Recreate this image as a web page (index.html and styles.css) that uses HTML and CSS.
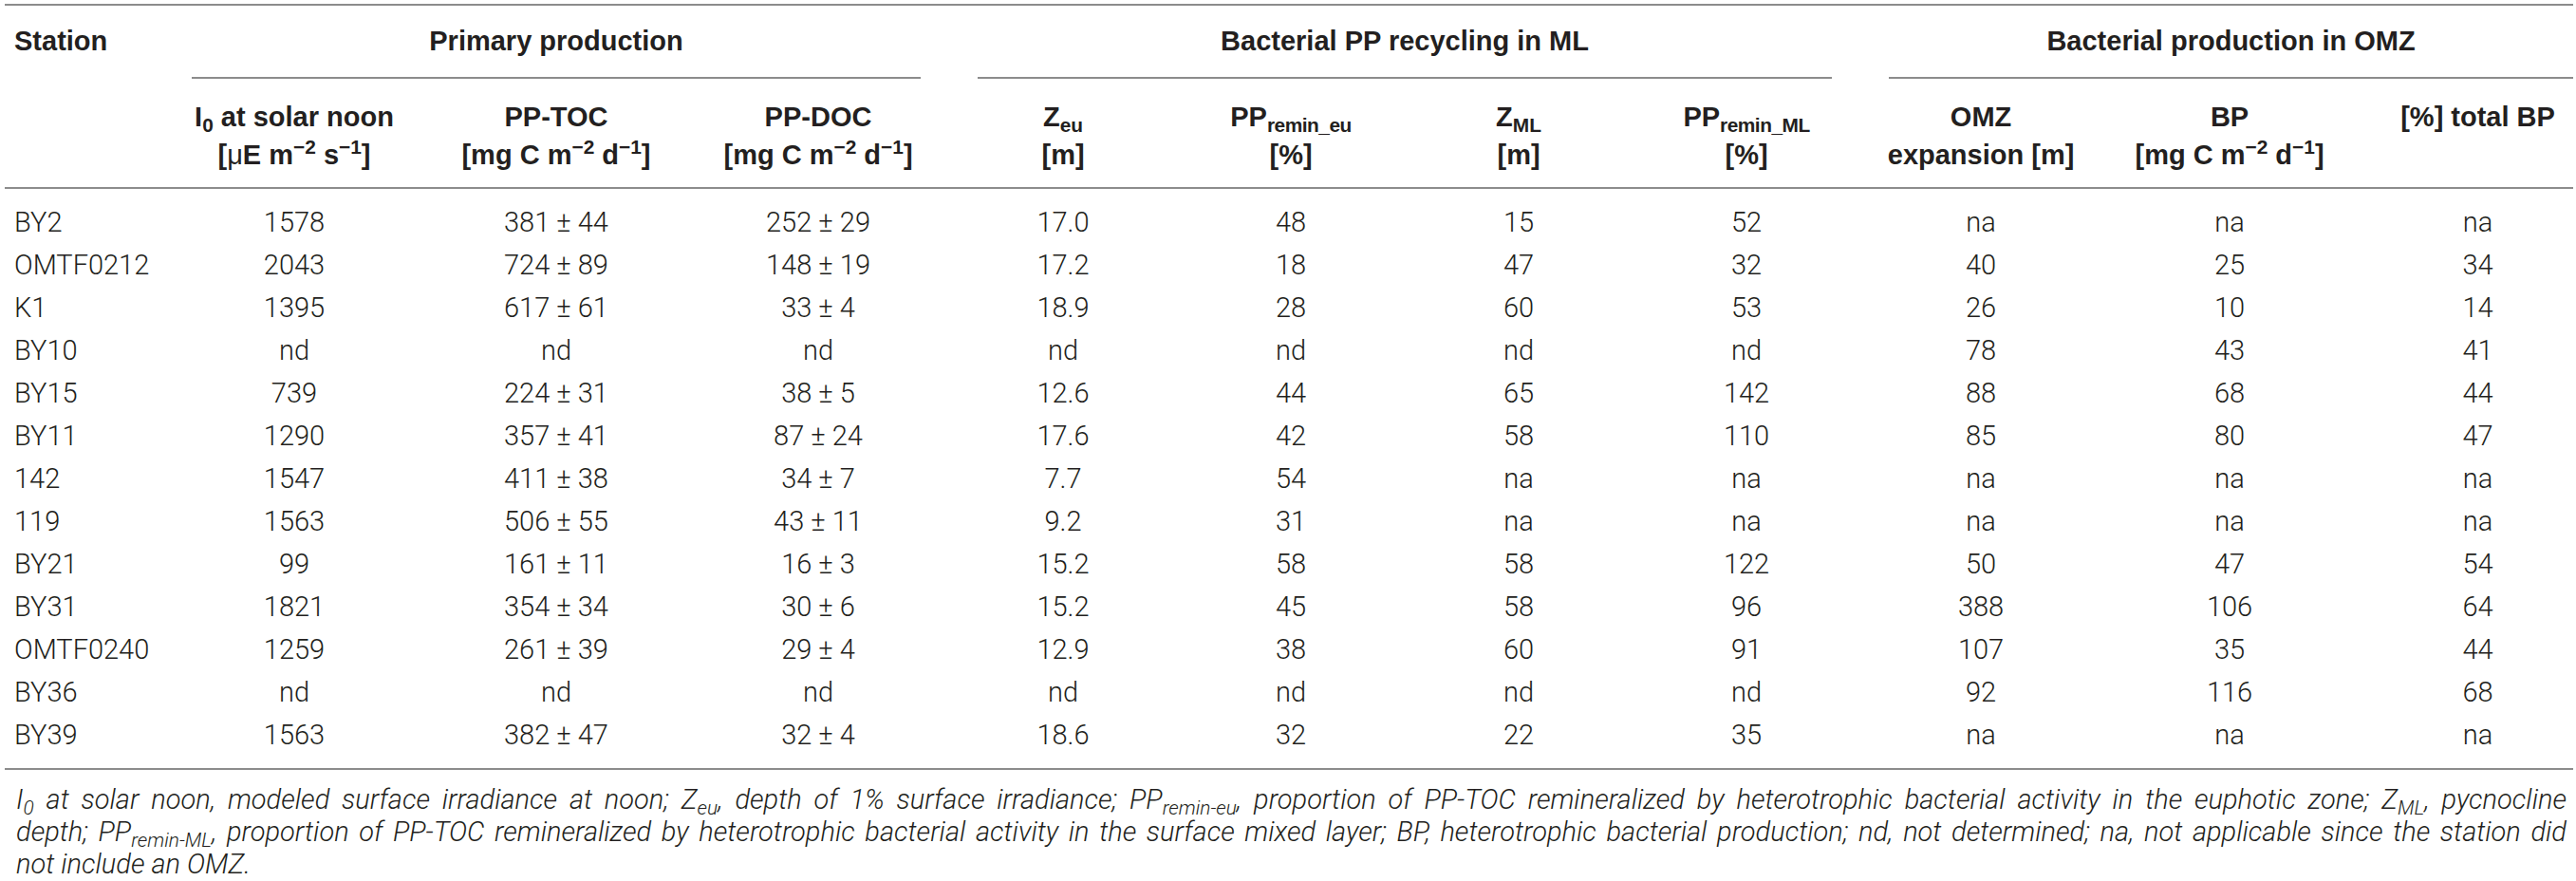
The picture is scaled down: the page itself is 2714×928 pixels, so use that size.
FILE: index.html
```html
<!DOCTYPE html>
<html>
    <head>
        <link rel="stylesheet" href="styles.css">
    </head>
 <body>
    <div class="page">
        <table class="data">
            <colgroup>
                <col class="c-station">
                <col class="c-wide"><col class="c-wide"><col class="c-wide">
                <col class="c-mid"><col class="c-mid"><col class="c-mid"><col class="c-mid">
                <col class="c-omz"><col class="c-bp"><col class="c-total">
            </colgroup>
            <thead>
                <tr class="groups">
                    <th class="station">Station</th>
                    <th colspan="3" class="group"><div class="rule">Primary production</div></th>
                    <th colspan="4" class="group"><div class="rule">Bacterial PP recycling in ML</div></th>
                    <th colspan="3" class="group last"><div class="rule">Bacterial production in OMZ</div></th>
                </tr>
                <tr class="units">
                    <th></th>
                    <th>I<sub>0</sub> at solar noon<br>[<span class="mu">&mu;</span>E m<sup>&minus;2</sup> s<sup>&minus;1</sup>]</th>
                    <th>PP-TOC<br>[mg C m<sup>&minus;2</sup> d<sup>&minus;1</sup>]</th>
                    <th>PP-DOC<br>[mg C m<sup>&minus;2</sup> d<sup>&minus;1</sup>]</th>
                    <th>Z<sub>eu</sub><br>[m]</th>
                    <th>PP<sub class="narrow">remin_eu</sub><br>[%]</th>
                    <th>Z<sub>ML</sub><br>[m]</th>
                    <th>PP<sub class="narrow">remin_ML</sub><br>[%]</th>
                    <th>OMZ<br>expansion [m]</th>
                    <th>BP<br>[mg C m<sup>&minus;2</sup> d<sup>&minus;1</sup>]</th>
                    <th class="total">[%] total BP</th>
                </tr>
            </thead>
            <tbody>
                <tr><td>BY2</td><td>1578</td><td>381 &plusmn; 44</td><td>252 &plusmn; 29</td><td>17.0</td><td>48</td><td>15</td><td>52</td><td>na</td><td>na</td><td class="total">na</td></tr>
                <tr><td>OMTF0212</td><td>2043</td><td>724 &plusmn; 89</td><td>148 &plusmn; 19</td><td>17.2</td><td>18</td><td>47</td><td>32</td><td>40</td><td>25</td><td class="total">34</td></tr>
                <tr><td>K1</td><td>1395</td><td>617 &plusmn; 61</td><td>33 &plusmn; 4</td><td>18.9</td><td>28</td><td>60</td><td>53</td><td>26</td><td>10</td><td class="total">14</td></tr>
                <tr><td>BY10</td><td>nd</td><td>nd</td><td>nd</td><td>nd</td><td>nd</td><td>nd</td><td>nd</td><td>78</td><td>43</td><td class="total">41</td></tr>
                <tr><td>BY15</td><td>739</td><td>224 &plusmn; 31</td><td>38 &plusmn; 5</td><td>12.6</td><td>44</td><td>65</td><td>142</td><td>88</td><td>68</td><td class="total">44</td></tr>
                <tr><td>BY11</td><td>1290</td><td>357 &plusmn; 41</td><td>87 &plusmn; 24</td><td>17.6</td><td>42</td><td>58</td><td>110</td><td>85</td><td>80</td><td class="total">47</td></tr>
                <tr><td>142</td><td>1547</td><td>411 &plusmn; 38</td><td>34 &plusmn; 7</td><td>7.7</td><td>54</td><td>na</td><td>na</td><td>na</td><td>na</td><td class="total">na</td></tr>
                <tr><td>119</td><td>1563</td><td>506 &plusmn; 55</td><td>43 &plusmn; 11</td><td>9.2</td><td>31</td><td>na</td><td>na</td><td>na</td><td>na</td><td class="total">na</td></tr>
                <tr><td>BY21</td><td>99</td><td>161 &plusmn; 11</td><td>16 &plusmn; 3</td><td>15.2</td><td>58</td><td>58</td><td>122</td><td>50</td><td>47</td><td class="total">54</td></tr>
                <tr><td>BY31</td><td>1821</td><td>354 &plusmn; 34</td><td>30 &plusmn; 6</td><td>15.2</td><td>45</td><td>58</td><td>96</td><td>388</td><td>106</td><td class="total">64</td></tr>
                <tr><td>OMTF0240</td><td>1259</td><td>261 &plusmn; 39</td><td>29 &plusmn; 4</td><td>12.9</td><td>38</td><td>60</td><td>91</td><td>107</td><td>35</td><td class="total">44</td></tr>
                <tr><td>BY36</td><td>nd</td><td>nd</td><td>nd</td><td>nd</td><td>nd</td><td>nd</td><td>nd</td><td>92</td><td>116</td><td class="total">68</td></tr>
                <tr><td>BY39</td><td>1563</td><td>382 &plusmn; 47</td><td>32 &plusmn; 4</td><td>18.6</td><td>32</td><td>22</td><td>35</td><td>na</td><td>na</td><td class="total">na</td></tr>
            </tbody>
        </table>
        <p class="note">
            <span class="ln">I<sub>0</sub> at solar noon, modeled surface irradiance at noon; Z<sub>eu</sub>, depth of 1% surface irradiance; PP<sub>remin-eu</sub>, proportion of PP-TOC remineralized by heterotrophic bacterial activity in the euphotic zone; Z<sub>ML</sub>, pycnocline</span>
            <span class="ln">depth; PP<sub>remin-ML</sub>, proportion of PP-TOC remineralized by heterotrophic bacterial activity in the surface mixed layer; BP, heterotrophic bacterial production; nd, not determined; na, not applicable since the station did</span>
            <span class="ln end">not include an OMZ.</span>
        </p>
    </div>
 </body>
</html>
```
FILE: styles.css
```css
body{
    margin: 0;
    background: #ffffff;
    color: #231f20;
    font-family: Roboto, "Liberation Sans", sans-serif;
}
.page{
    padding: 4px 6px 0 5px;
}
.data{
    width: 2703px;
    table-layout: fixed;
    border-collapse: collapse;
}
.c-station{ width: 167px; }
.c-wide{ width: 276px; }
.c-mid{ width: 240px; }
.c-omz{ width: 254px; }
.c-bp{ width: 270px; }
.c-total{ width: 227px; }

th{
    font-family: "Liberation Sans", Arial, sans-serif;
    font-weight: bold;
    font-size: 29px;
    line-height: 40px;
    text-align: center;
    vertical-align: top;
    color: #231f20;
}
.groups th{
    border-top: 2px solid #8c8c8c;
    padding: 17px 0 0 0;
}
.groups .station{
    text-align: left;
    padding-left: 10px;
}
.rule{
    margin: 0 30px;
    padding-bottom: 18px;
    border-bottom: 2px solid #8c8c8c;
}
.group.last .rule{
    margin-right: 0;
}
.units th{
    padding: 20px 0 14px 0;
    border-bottom: 2px solid #8c8c8c;
}
.total{
    padding-left: 26px;
}
.units th.total{
    padding-left: 26px;
}

td{
    font-weight: 300;
    font-size: 29px;
    line-height: 45px;
    padding: 0;
    text-align: center;
    white-space: nowrap;
}
td:first-child{
    text-align: left;
    padding-left: 10px;
}
tbody tr:first-child td{
    padding-top: 13px;
}
tbody tr:last-child td{
    padding-bottom: 12px;
    border-bottom: 2px solid #8c8c8c;
}

sub, sup{
    font-size: 0.72em;
    line-height: 0;
}
sub{
    vertical-align: -0.28em;
}
sup{
    vertical-align: 0.55em;
}
.narrow{
    letter-spacing: -0.5px;
}
.mu{
    font-weight: normal;
}

.note{
    margin: 14px 0 0 0;
    padding: 0 4px 0 12px;
    font-style: italic;
    font-weight: 300;
    font-size: 29px;
    line-height: 34px;
}
.ln{
    display: block;
    white-space: nowrap;
    text-align: justify;
    text-align-last: justify;
}
.ln.end{
    text-align-last: left;
}
```
